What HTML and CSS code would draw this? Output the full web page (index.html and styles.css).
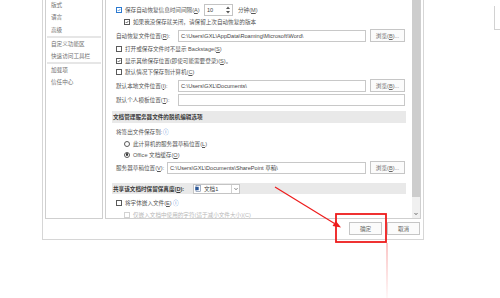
FILE: index.html
```html
<!DOCTYPE html>
<html lang="zh-CN">
<head>
    <meta charset="UTF-8">
    <title>Word 选项 - 保存</title>
    <link rel="stylesheet" href="styles.css">
</head>
<body>

    <div class="dialog">
        <div class="main">
            <nav class="nav">
                <div class="nav-item first">版式</div>
                <div class="nav-item">语言</div>
                <div class="nav-item">高级</div>
                <div class="nav-sep"></div>
                <div class="nav-item">自定义功能区</div>
                <div class="nav-item">快速访问工具栏</div>
                <div class="nav-sep"></div>
                <div class="nav-item">加载项</div>
                <div class="nav-item">信任中心</div>
            </nav>

            <div class="content">
                <div class="scroll">
                    <div class="top-edge"></div>

                    <div class="row r1">
                        <span class="check checked focus"><svg viewBox="0 0 6 6"><polyline points="1,3 2.5,4.5 5,1.5"/></svg></span>
                        <span class="label spin-label">保存自动恢复信息时间间隔(<u>A</u>)</span>
                        <span class="spin">10<span class="spin-btns"><svg viewBox="0 0 6 10"><polygon points="1,4 5,4 3,1.5"/><polygon points="1,6 5,6 3,8.5"/></svg></span></span>
                        <span class="label unit">分钟(<u>M</u>)</span>
                    </div>

                    <div class="row r2 sub">
                        <span class="check checked"><svg viewBox="0 0 6 6"><polyline points="1,3 2.5,4.5 5,1.5"/></svg></span>
                        <span class="label">如果我没保存就关闭，请保留上次自动恢复的版本</span>
                    </div>

                    <div class="row r3">
                        <span class="label field-label">自动恢复文件位置(<u>R</u>):</span>
                        <span class="textbox">C:\Users\GXL\AppData\Roaming\Microsoft\Word\</span>
                        <button class="browse">浏览(<u>B</u>)...</button>
                    </div>

                    <div class="row r4">
                        <span class="check"></span>
                        <span class="label">打开或保存文件时不显示 Backstage(<u>S</u>)</span>
                    </div>

                    <div class="row r5">
                        <span class="check checked"><svg viewBox="0 0 6 6"><polyline points="1,3 2.5,4.5 5,1.5"/></svg></span>
                        <span class="label">显示其他保存位置(即使可能需要登录)(<u>S</u>)。</span>
                    </div>

                    <div class="row r6">
                        <span class="check"></span>
                        <span class="label">默认情况下保存到计算机(<u>C</u>)</span>
                    </div>

                    <div class="row r7">
                        <span class="label field-label">默认本地文件位置(<u>I</u>):</span>
                        <span class="textbox">C:\Users\GXL\Documents\</span>
                        <button class="browse">浏览(<u>B</u>)...</button>
                    </div>

                    <div class="row r8">
                        <span class="label field-label">默认个人模板位置(<u>T</u>):</span>
                        <span class="textbox wide"></span>
                    </div>

                    <div class="band b1">文档管理服务器文件的脱机编辑选项</div>

                    <div class="row r9">
                        <span class="label">将签出文件保存到:</span>
                        <span class="info">ⓘ</span>
                    </div>

                    <div class="row r10 sub">
                        <span class="radio"></span>
                        <span class="label">此计算机的服务器草稿位置(<u>L</u>)</span>
                    </div>

                    <div class="row r11 sub">
                        <span class="radio on"></span>
                        <span class="label">Office 文档缓存(<u>O</u>)</span>
                    </div>

                    <div class="row r12">
                        <span class="label field-label short">服务器草稿位置(<u>V</u>):</span>
                        <span class="textbox">C:\Users\GXL\Documents\SharePoint 草稿\</span>
                        <button class="browse">浏览(<u>B</u>)...</button>
                    </div>

                    <div class="band b2">
                        <span class="band-label">共享该文档时保留保真度(<u>D</u>):</span>
                        <span class="select">
                            <svg class="doc-icon" viewBox="0 0 6 7"><rect x="1" y="0.5" width="4.5" height="6" fill="#fff" stroke="#6b7fa0" stroke-width="0.6"/><rect x="0.3" y="1.8" width="3.4" height="3.4" fill="#2b5797"/></svg>
                            <span class="select-text">文档1</span>
                            <span class="select-arrow"><svg viewBox="0 0 6 6"><polyline points="1.5,2.2 3,3.7 4.5,2.2"/></svg></span>
                        </span>
                    </div>

                    <div class="row r13">
                        <span class="check"></span>
                        <span class="label">将字体嵌入文件(<u>E</u>)</span>
                        <span class="info">ⓘ</span>
                    </div>

                    <div class="row r14 sub disabled">
                        <span class="check"></span>
                        <span class="label">仅嵌入文档中使用的字符(适于减小文件大小)(<u>C</u>)</span>
                    </div>
                </div>

                <div class="scrollbar">
                    <div class="thumb"></div>
                    <div class="track">
                        <svg class="down" viewBox="0 0 6 6"><polyline points="1.5,2 3,3.7 4.5,2"/></svg>
                    </div>
                </div>
            </div>
        </div>

        <div class="footer">
            <button class="btn">确定</button>
            <button class="btn">取消</button>
        </div>
    </div>

    <div class="fragment"></div>

    <!-- red markup drawn over the screenshot -->
    <svg class="markup" viewBox="0 0 500 298" width="500" height="298">
        <defs>
            <linearGradient id="fade" x1="0" y1="0" x2="0" y2="1">
                <stop offset="0" stop-color="#f04040" stop-opacity="0.3"/>
                <stop offset="1" stop-color="#f04040" stop-opacity="0.04"/>
            </linearGradient>
        </defs>
        <rect x="386" y="243" width="2" height="55" fill="url(#fade)"/>
        <rect x="336" y="214" width="50" height="28" fill="none" stroke="#ee1c1c" stroke-width="1.8"/>
        <line x1="275" y1="187" x2="334.5" y2="223.5" stroke="#ee1c1c" stroke-width="1.2"/>
        <polygon points="341,227.5 332.6,225.9 335.8,220.8" fill="#ee1c1c"/>
    </svg>

</body>
</html>
```

FILE: styles.css
```css
body {
    margin: 0;
    width: 500px;
    height: 298px;
    overflow: hidden;
    background: #fff;
    display: flex;
    align-items: flex-start;
    font-family: 'Liberation Sans', 'Noto Sans CJK SC', sans-serif;
    font-size: 5.6px;
    color: #555;
}

u {
    text-decoration: underline;
    text-underline-offset: 1px;
}

.dialog {
    margin-left: 42px;
    width: 382px;
    box-sizing: border-box;
    padding: 0 2px;
    border: 1px solid #d6d6d6;
    border-top: none;
    background: #fff;
}

.main {
    display: flex;
    gap: 2px;
    height: 219px;
}

/* left category list */
.nav {
    width: 58px;
    box-sizing: border-box;
    border: 1px solid #cfcfcf;
    border-top: none;
    padding-left: 5px;
    color: #707070;
}

.nav-item {
    height: 12.4px;
    line-height: 12.4px;
    white-space: nowrap;
}

.nav-item.first {
    margin-top: -1px;
}

.nav-sep {
    height: 1.5px;
    margin: 0 1px 0 -4px;
    background: #e6e6e6;
}

/* options pane */
.content {
    width: 316px;
    box-sizing: border-box;
    border: 1px solid #cfcfcf;
    border-top: none;
    display: flex;
}

.scroll {
    flex: 1;
    padding: 0 6px;
    overflow: hidden;
}

.top-edge {
    height: 4px;
}

.row {
    display: flex;
    align-items: center;
    padding-left: 4px;
    height: 12px;
    white-space: nowrap;
}

.row.sub {
    padding-left: 12px;
}

.r3, .r7, .r8, .r12 {
    height: 13px;
}

.r3 { margin-top: 1px; }
.r4 { margin-top: 1px; }
.r5 { height: 11px; }
.r6 { height: 11px; }
.r7 { margin-top: 2px; }
.r8 { margin-top: 1px; }
.r9 { margin-top: 3px; }
.r10, .r11 { height: 11px; }
.r12 { margin-top: 1px; }
.r13 { margin-top: 3px; }
.r14 { height: 11px; }

.check {
    width: 6px;
    height: 6px;
    box-sizing: border-box;
    border: 1px solid #5a5a5a;
    background: #fff;
    margin-right: 3px;
    flex: none;
    display: flex;
}

.check svg {
    width: 100%;
    height: 100%;
    fill: none;
    stroke: #333;
    stroke-width: 1;
}

.check.focus {
    border-color: #2b79d0;
}

.check.focus svg {
    stroke: #2b79d0;
}

.radio {
    width: 6px;
    height: 6px;
    box-sizing: border-box;
    border: 1px solid #5a5a5a;
    border-radius: 50%;
    margin-right: 3px;
    flex: none;
    display: flex;
    align-items: center;
    justify-content: center;
}

.radio.on::after {
    content: '';
    width: 2.4px;
    height: 2.4px;
    border-radius: 50%;
    background: #333;
}

.spin-label {
    width: 79px;
}

.spin {
    width: 29px;
    height: 12px;
    box-sizing: border-box;
    border: 1px solid #c4c4c4;
    display: flex;
    align-items: center;
    padding-left: 2px;
    color: #444;
}

.spin-btns {
    margin-left: auto;
    width: 6px;
    height: 10px;
    margin-right: 1px;
}

.spin-btns svg {
    width: 100%;
    height: 100%;
    fill: #555;
}

.unit {
    margin-left: 5px;
}

.field-label {
    width: 62px;
}

.field-label.short {
    width: 51px;
}

.textbox {
    width: 188px;
    height: 12px;
    box-sizing: border-box;
    border: 1px solid #c8c8c8;
    padding-left: 2px;
    display: flex;
    align-items: center;
    color: #444;
    overflow: hidden;
}

.textbox.wide {
    width: 227px;
}

.r12 .textbox {
    width: 199px;
}

.browse {
    margin-left: 4px;
    width: 35px;
    height: 13px;
    box-sizing: border-box;
    border: 1px solid #c6c6c6;
    background: #fbfbfb;
    color: #666;
    font: inherit;
    padding: 0;
}

.info {
    color: #3b7bd0;
    font-family: 'DejaVu Sans', sans-serif;
    font-size: 5.5px;
    margin-left: 1px;
}

.band {
    height: 12px;
    background: #e9e9e9;
    display: flex;
    align-items: center;
    padding-left: 1px;
    color: #3a3a3a;
    white-space: nowrap;
}

.b1 {
    margin-top: 5px;
    font-weight: bold;
}

.b2 {
    margin-top: 9px;
    height: 11px;
}

.band-label {
    width: 80px;
    font-weight: bold;
}

.select {
    width: 47px;
    height: 10px;
    box-sizing: border-box;
    border: 1px solid #c4c4c4;
    background: #fff;
    display: flex;
    align-items: center;
}

.doc-icon {
    width: 6px;
    height: 7px;
    margin: 0 3px 0 1px;
}

.select-text {
    flex: 1;
    color: #444;
}

.select-arrow {
    width: 7px;
    height: 100%;
    border-left: 1px solid #d0d0d0;
    display: flex;
    align-items: center;
    justify-content: center;
}

.select-arrow svg {
    width: 6px;
    height: 6px;
    fill: none;
    stroke: #555;
    stroke-width: 0.8;
}

.disabled {
    color: #b8b8b8;
}

.disabled .check {
    border-color: #d2d2d2;
}

/* vertical scrollbar */
.scrollbar {
    width: 8px;
    display: flex;
    flex-direction: column;
    background: #f0f0f0;
}

.thumb {
    height: 197px;
    background: #cdcdcd;
}

.track {
    flex: 1;
    display: flex;
    align-items: flex-end;
    justify-content: center;
    padding-bottom: 1px;
}

.down {
    width: 6px;
    height: 6px;
    fill: none;
    stroke: #666;
    stroke-width: 0.9;
}

/* dialog buttons */
.footer {
    height: 20px;
    display: flex;
    justify-content: flex-end;
    align-items: flex-start;
    gap: 5px;
    padding: 3px 1px 0 0;
    box-sizing: border-box;
}

.btn {
    width: 33px;
    height: 13px;
    box-sizing: border-box;
    border: 1px solid #c6c6c6;
    background: #fbfbfb;
    color: #666;
    font: inherit;
    padding: 0;
}

/* edge of another window at the right */
.fragment {
    margin: 6px 0 0 70px;
    width: 6px;
    height: 23px;
    border-left: 1px solid #d2d2d2;
    border-bottom: 1px solid #d2d2d2;
}

.markup {
    position: absolute;
    left: 0;
    top: 0;
    pointer-events: none;
}
```
